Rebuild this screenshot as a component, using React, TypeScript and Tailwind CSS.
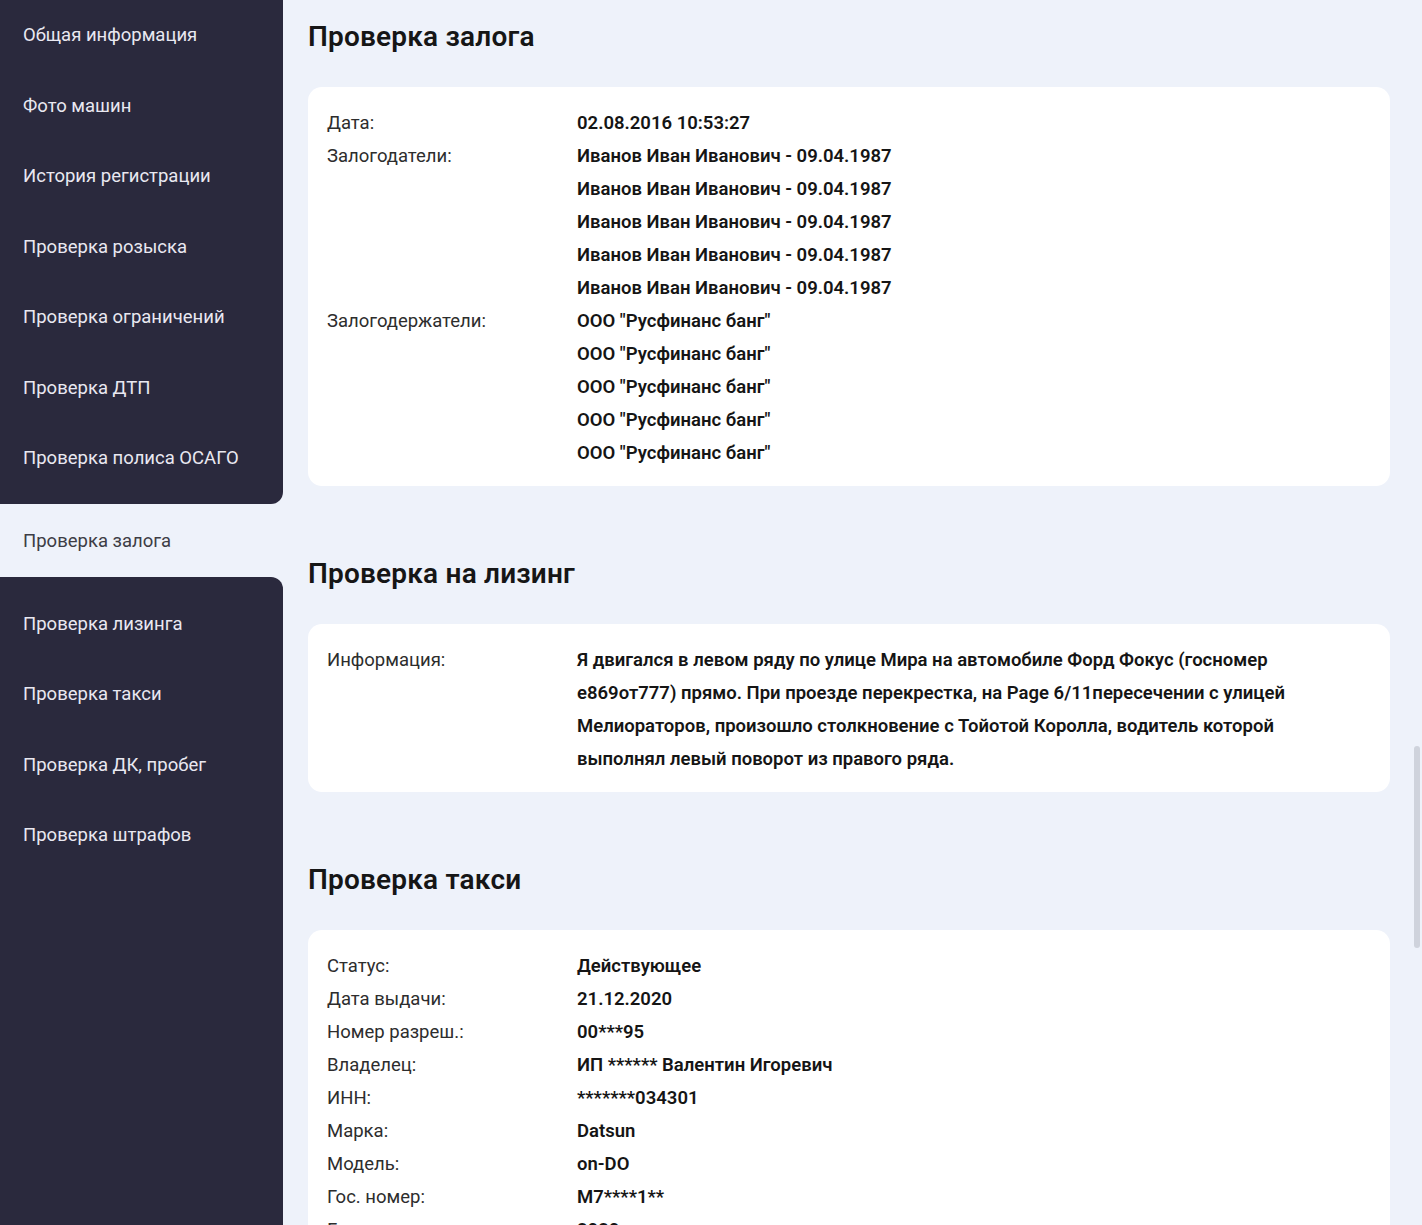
const navTop = [
  "Общая информация",
  "Фото машин",
  "История регистрации",
  "Проверка розыска",
  "Проверка ограничений",
  "Проверка ДТП",
  "Проверка полиса ОСАГО",
];

const navBottom = ["Проверка лизинга", "Проверка такси", "Проверка ДК, пробег", "Проверка штрафов"];

const pledgors = Array(5).fill("Иванов Иван Иванович - 09.04.1987");
const holders = Array(5).fill('ООО "Русфинанс банг"');

const taxi: [string, string][] = [
  ["Статус:", "Действующее"],
  ["Дата выдачи:", "21.12.2020"],
  ["Номер разреш.:", "00***95"],
  ["Владелец:", "ИП ****** Валентин Игоревич"],
  ["ИНН:", "*******034301"],
  ["Марка:", "Datsun"],
  ["Модель:", "on-DO"],
  ["Гос. номер:", "M7****1**"],
  ["Год выпуска:", "2020"],
];

const leasingLines = [
  "Я двигался в левом ряду по улице Мира на автомобиле Форд Фокус (госномер",
  "е869от777) прямо. При проезде перекрестка, на Page 6/11пересечении с улицей",
  "Мелиораторов, произошло столкновение с Тойотой Королла, водитель которой",
  "выполнял левый поворот из правого ряда.",
];

function NavItem({ label }: { label: string }) {
  return (
    <div className="h-[70.5px] flex items-center pl-[23px] text-[18.5px] text-[#e9e8f1] whitespace-nowrap">
      {label}
    </div>
  );
}

function Row({ label, values }: { label: string; values: string[] }) {
  return (
    <div className="flex">
      <div className="w-[250px] shrink-0 text-[#2d2d2d]">{label}</div>
      <div className="font-semibold text-[#151515]">
        {values.map((v, i) => (
          <div key={i} className="whitespace-nowrap">
            {v}
          </div>
        ))}
      </div>
    </div>
  );
}

function Section({ title, children }: { title: string; children: React.ReactNode }) {
  return (
    <section>
      <h2 className="h-[74px] mb-[13px] flex items-center text-[28px] font-semibold text-[#161616] tracking-[0.2px]">
        {title}
      </h2>
      <div className="bg-white rounded-[14px] px-[19px] pt-[20px] pb-[16px] text-[18.5px] leading-[33px]">
        {children}
      </div>
    </section>
  );
}

export default function App() {
  return (
    <div
      className="relative h-[1225px] w-[1422px] overflow-hidden flex bg-[#eef2fa]"
      style={{ fontFamily: "Roboto, 'Noto Sans', sans-serif" }}
    >
      {/* Sidebar */}
      <aside className="w-[283px] shrink-0 flex flex-col">
        <nav className="bg-[#2a293d] rounded-br-[12px] pt-[1px] pb-[9px]">
          {navTop.map((l) => (
            <NavItem key={l} label={l} />
          ))}
        </nav>
        <div className="h-[73px] flex items-center pl-[23px] pt-[4px] text-[18.5px] text-[#3d3d45]">
          Проверка залога
        </div>
        <nav className="flex-1 bg-[#2a293d] rounded-tr-[12px] pt-[13px]">
          {navBottom.map((l) => (
            <NavItem key={l} label={l} />
          ))}
        </nav>
      </aside>

      {/* Content */}
      <main className="flex-1 pl-[25px] pr-[32px] flex flex-col gap-[51px]">
        <Section title="Проверка залога">
          <Row label="Дата:" values={["02.08.2016 10:53:27"]} />
          <Row label="Залогодатели:" values={pledgors} />
          <Row label="Залогодержатели:" values={holders} />
        </Section>
        <Section title="Проверка на лизинг">
          <Row label="Информация:" values={leasingLines} />
        </Section>
        <Section title="Проверка такси">
          {taxi.map(([l, v]) => (
            <Row key={l} label={l} values={[v]} />
          ))}
        </Section>
      </main>

      {/* scrollbar thumb */}
      <div className="absolute right-[2px] top-[746px] w-[6px] h-[202px] rounded-full bg-[#cfd3dc]" />
    </div>
  );
}
